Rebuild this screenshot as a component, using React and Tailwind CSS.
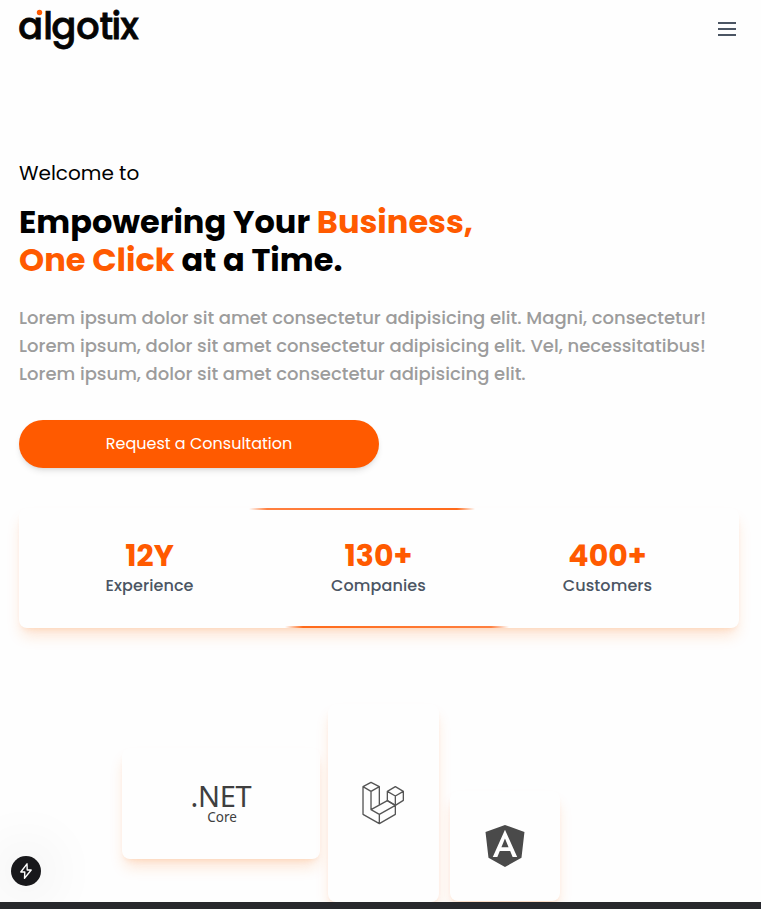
import { FaAngular } from "react-icons/fa";

const stats = [
  { value: "12Y", label: "Experience" },
  { value: "130+", label: "Companies" },
  { value: "400+", label: "Customers" },
];

function Logo() {
  return (
    <svg width="124" height="44" viewBox="0 0 124 44" className="overflow-visible" aria-label="algotix">
      <text
        x="-0.8 24.2 32.6 57.2 80.6 92.4 101.5"
        y="30.5"
        fontSize="36.5"
        fontWeight="500"
        strokeWidth="0.8"
        className="fill-[#050505] stroke-[#050505] font-['Poppins','Inter',sans-serif]"
      >
        algotix
      </text>
      <circle cx="20.5" cy="4.5" r="2.7" fill="#ff5a00" />
    </svg>
  );
}

function Laravel() {
  return (
    <svg
      width="44.7"
      height="46"
      viewBox="784 270 134 138"
      fill="none"
      stroke="#555"
      strokeWidth="4"
      strokeLinejoin="round"
    >
      <path d="M814 277l25 13-25 14-24-14zM790 290v83l49 28 48-28v-27M814 304v55l25 14v28M839 373l48-27-24-14-49 27M839 290v55" />
      <path d="M887 290l24 14v27l-24 15-24-14v-28zM863 304l24 14 24-14M887 318v28" />
    </svg>
  );
}

export default function App() {
  return (
    <div className="flex h-[909px] w-full flex-col overflow-hidden bg-[#fefefe] font-['Poppins','Inter',sans-serif] text-black">
      <header className="flex h-[60px] shrink-0 items-center justify-between pr-[25px] pl-[19px]">
        <Logo />
        <div className="mb-0.5 flex w-[18px] flex-col gap-1">
          <span className="h-0.5 bg-[#4b5563]" />
          <span className="h-0.5 bg-[#4b5563]" />
          <span className="h-0.5 bg-[#4b5563]" />
        </div>
      </header>

      <main className="flex grow flex-col px-[19px] pt-[98px]">
        <p className="text-xl leading-[30px]">Welcome to</p>
        <h1 className="mt-[15px] text-[32px] leading-[38px] font-bold whitespace-nowrap">
          <span className="block">
            Empowering Your <span className="text-[#ff5a00]">Business,</span>
          </span>
          <span className="block">
            <span className="text-[#ff5a00]">One Click</span> at a Time.
          </span>
        </h1>
        <p className="mt-[25px] text-lg leading-7 font-medium whitespace-nowrap text-[#9c9c9c]">
          <span className="block w-fit">Lorem ipsum dolor sit amet consectetur adipisicing elit. Magni, consectetur!</span>
          <span className="block w-fit">Lorem ipsum, dolor sit amet consectetur adipisicing elit. Vel, necessitatibus!</span>
          <span className="block w-fit">Lorem ipsum, dolor sit amet consectetur adipisicing elit.</span>
        </p>
        <button className="mt-8 h-12 w-[360px] shrink-0 rounded-full bg-[#ff5a00] text-base text-white shadow-md">
          Request a Consultation
        </button>

        <section className="relative mt-10 grid h-[120px] w-[720px] shrink-0 grid-cols-3 rounded-lg bg-[#fefefe] pt-8 pr-[17px] pl-4 shadow-lg shadow-[#f97316]/20">
          {stats.map((s) => (
            <div key={s.label} className="flex flex-col items-center">
              <span className="text-[30px] leading-8 font-bold text-[#ff5a00]">{s.value}</span>
              <span className="mt-0.5 text-base leading-6 font-medium tracking-[0.1px] text-[#4b5563]">{s.label}</span>
            </div>
          ))}
          <span className="absolute top-0 left-[230px] h-0.5 w-[226px] bg-[linear-gradient(90deg,transparent,#ff8040_8%,#ff6a1a_92%,transparent)]" />
          <span className="absolute bottom-0 left-[266px] h-0.5 w-[224px] bg-[linear-gradient(90deg,transparent,#ff6a1a_8%,#ff8040_92%,transparent)]" />
        </section>

        <section className="mt-[76px] ml-[103px] flex h-[198px] shrink-0">
          <div className="mt-11 flex h-[111px] w-[198px] flex-col items-center justify-center rounded-lg bg-[#fefefe] font-['Noto_Sans',sans-serif] text-[#3f3f3f] shadow-lg shadow-[#f97316]/20">
            <span className="-mt-0.5 text-[29px] leading-7 tracking-[-0.3px]">.NET</span>
            <span className="ml-0.5 text-[13.5px] leading-[14px]">Core</span>
          </div>
          <div className="ml-2 flex h-[198px] w-[111px] items-center justify-center rounded-lg bg-[#fefefe] shadow-lg shadow-[#f97316]/20">
            <Laravel />
          </div>
          <div className="mt-[87px] ml-[11px] flex h-[110px] w-[110px] items-center justify-center rounded-lg bg-[#fefefe] shadow-lg shadow-[#f97316]/20">
            <FaAngular size={48} color="#4a4a4a" />
          </div>
        </section>
      </main>

      <footer className="relative z-10 h-[7px] shrink-0 bg-[#27282c]" />

      <div className="absolute top-[856px] left-[11px] flex size-[30px] items-center justify-center rounded-full bg-[#18181b] shadow-[0_0_60px_rgba(0,0,0,0.2)]">
        <svg width="18" height="18" viewBox="0 0 18 18" fill="none" stroke="#fff" strokeWidth="1.4" strokeLinejoin="round">
          <path d="M10 1.8L3.8 10h4l-.3 6.2L14.2 8h-4z" />
        </svg>
      </div>
    </div>
  );
}
